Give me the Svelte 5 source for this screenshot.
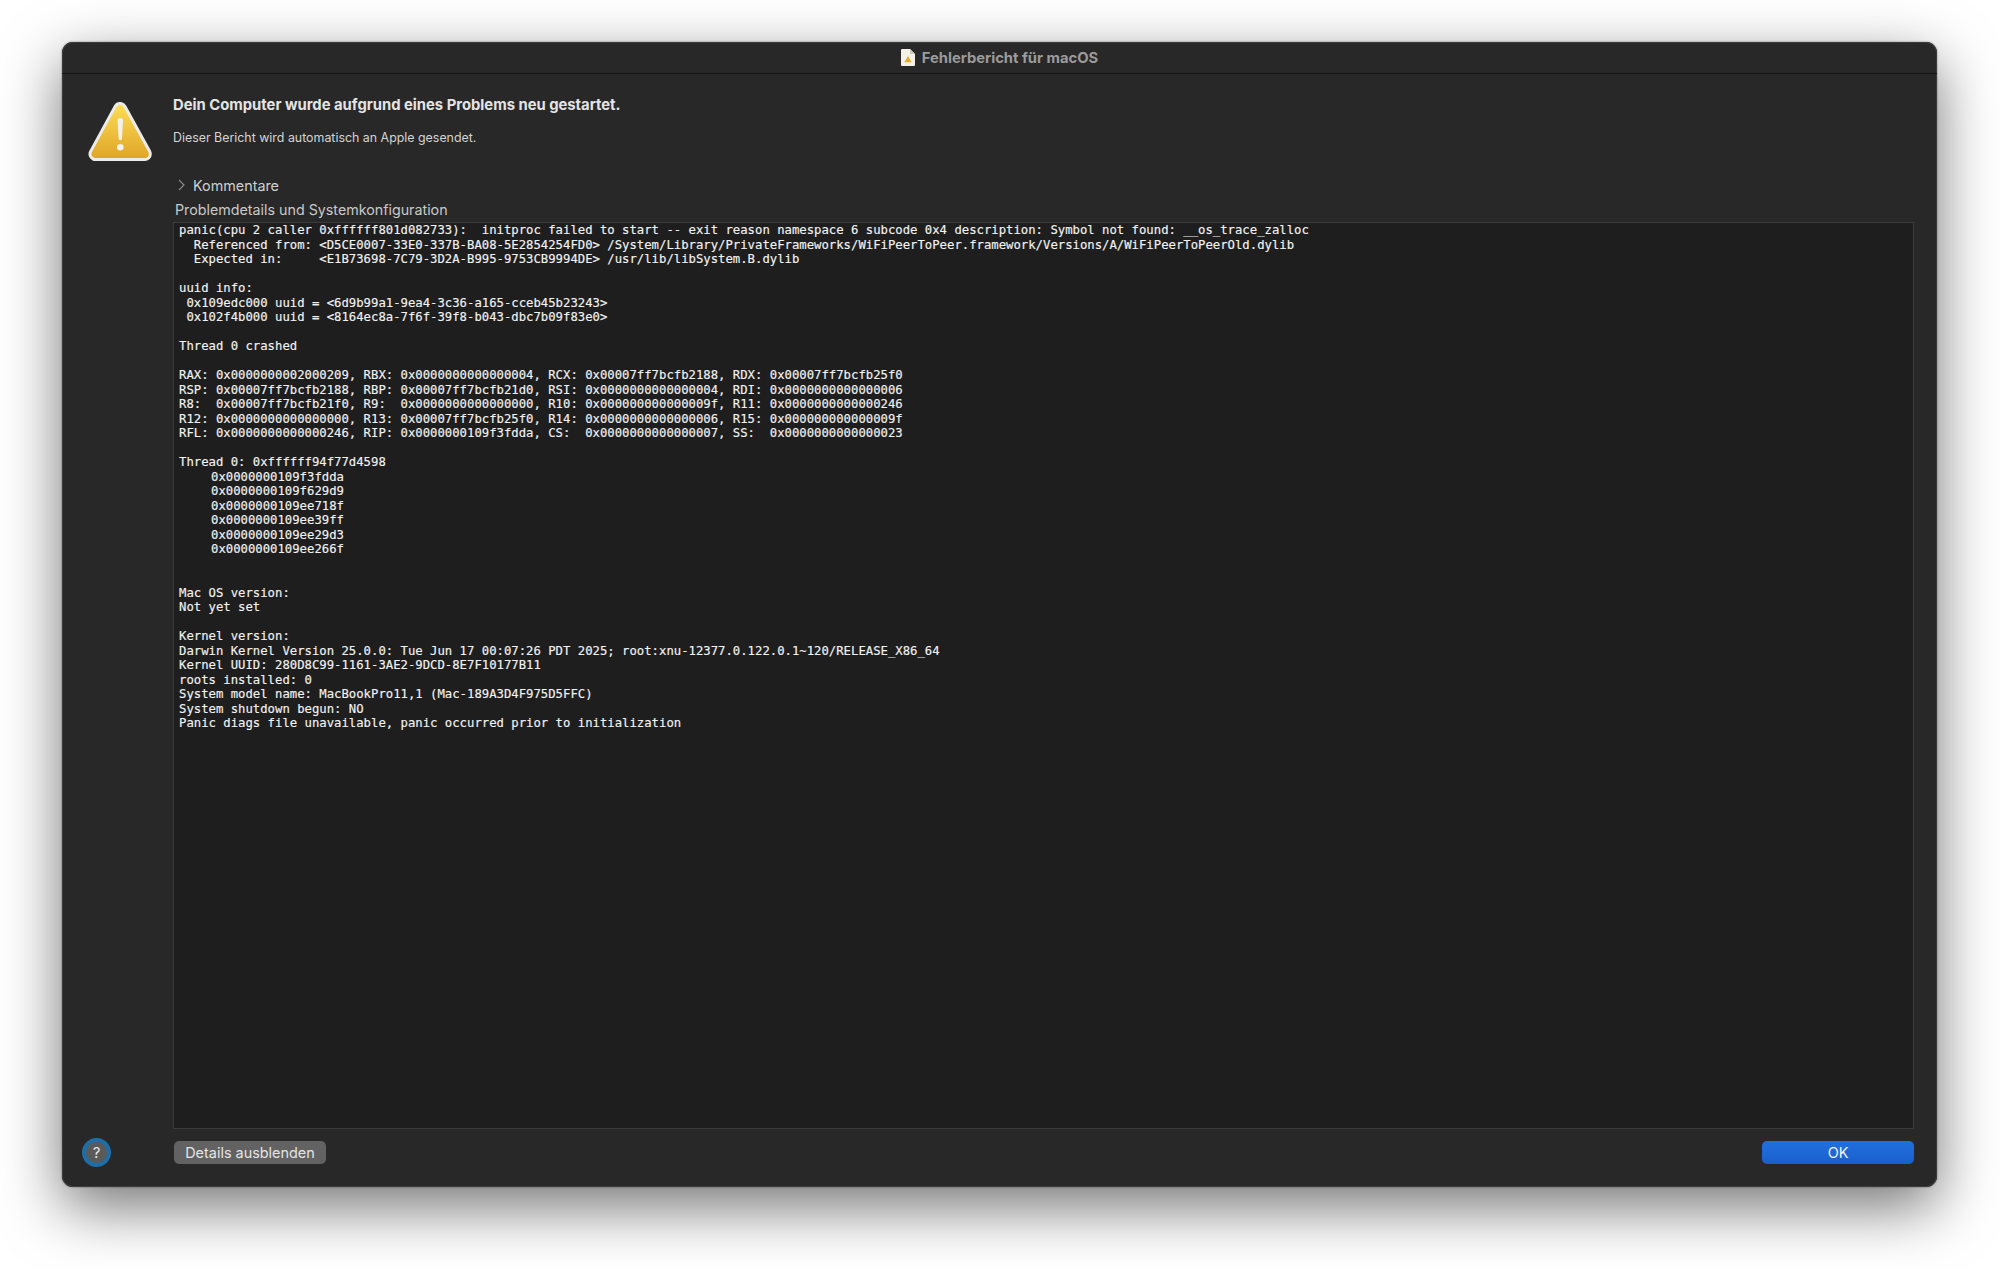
<script>
  const log = `panic(cpu 2 caller 0xffffff801d082733):  initproc failed to start -- exit reason namespace 6 subcode 0x4 description: Symbol not found: __os_trace_zalloc
  Referenced from: <D5CE0007-33E0-337B-BA08-5E2854254FD0> /System/Library/PrivateFrameworks/WiFiPeerToPeer.framework/Versions/A/WiFiPeerToPeerOld.dylib
  Expected in:     <E1B73698-7C79-3D2A-B995-9753CB9994DE> /usr/lib/libSystem.B.dylib

uuid info:
 0x109edc000 uuid = <6d9b99a1-9ea4-3c36-a165-cceb45b23243>
 0x102f4b000 uuid = <8164ec8a-7f6f-39f8-b043-dbc7b09f83e0>

Thread 0 crashed

RAX: 0x0000000002000209, RBX: 0x0000000000000004, RCX: 0x00007ff7bcfb2188, RDX: 0x00007ff7bcfb25f0
RSP: 0x00007ff7bcfb2188, RBP: 0x00007ff7bcfb21d0, RSI: 0x0000000000000004, RDI: 0x0000000000000006
R8:  0x00007ff7bcfb21f0, R9:  0x0000000000000000, R10: 0x000000000000009f, R11: 0x0000000000000246
R12: 0x0000000000000000, R13: 0x00007ff7bcfb25f0, R14: 0x0000000000000006, R15: 0x000000000000009f
RFL: 0x0000000000000246, RIP: 0x0000000109f3fdda, CS:  0x0000000000000007, SS:  0x0000000000000023

Thread 0: 0xffffff94f77d4598
\t0x0000000109f3fdda
\t0x0000000109f629d9
\t0x0000000109ee718f
\t0x0000000109ee39ff
\t0x0000000109ee29d3
\t0x0000000109ee266f


Mac OS version:
Not yet set

Kernel version:
Darwin Kernel Version 25.0.0: Tue Jun 17 00:07:26 PDT 2025; root:xnu-12377.0.122.0.1~120/RELEASE_X86_64
Kernel UUID: 280D8C99-1161-3AE2-9DCD-8E7F10177B11
roots installed: 0
System model name: MacBookPro11,1 (Mac-189A3D4F975D5FFC)
System shutdown begun: NO
Panic diags file unavailable, panic occurred prior to initialization`
</script>

<div class="window">
  <header class="titlebar">
    <svg class="doc" viewBox="0 0 14 17" width="14" height="17">
      <path d="M1 0h8l5 5v11a1 1 0 0 1-1 1H1a1 1 0 0 1-1-1V1a1 1 0 0 1 1-1z" fill="#f4f1e8" />
      <path d="M9 0l5 5H9z" fill="#cfcabd" />
      <path d="M7 7l3.6 6.2H3.4z" fill="#e2ac2c" />
    </svg>
    <span>Fehlerbericht für macOS</span>
  </header>

  <div class="body">
    <aside class="side">
      <svg class="warn" viewBox="0 0 66 60" width="66" height="60">
        <defs>
          <linearGradient id="warn-fill" gradientUnits="userSpaceOnUse" x1="0" y1="4" x2="0" y2="57">
            <stop offset="0" stop-color="#fbdc53" />
            <stop offset="1" stop-color="#e0a428" />
          </linearGradient>
        </defs>
        <path d="M33 7 L8.5 52 H57.8 Z" fill="#ecebe8" stroke="#ecebe8" stroke-width="14" stroke-linejoin="round" />
        <path d="M33 7 L8.5 52 H57.8 Z" fill="url(#warn-fill)" stroke="url(#warn-fill)" stroke-width="8" stroke-linejoin="round" />
        <path d="M30.6 18.6a2.7 2.7 0 0 1 5.4 0L35 36.5a1.7 1.7 0 0 1-3.4 0z" fill="#f3f1ea" />
        <circle cx="33.3" cy="45.3" r="3.3" fill="#f3f1ea" />
      </svg>
    </aside>

    <main class="main">
      <h1>Dein Computer wurde aufgrund eines Problems neu gestartet.</h1>
      <p class="sub">Dieser Bericht wird automatisch an Apple gesendet.</p>

      <div class="disclosure">
        <svg viewBox="0 0 7 12" width="7" height="12">
          <path d="M1 1l5 5-5 5" fill="none" stroke="#8a8a8a" stroke-width="1.2" />
        </svg>
        <span>Kommentare</span>
      </div>

      <div class="label">Problemdetails und Systemkonfiguration</div>
      <pre class="report">{log}</pre>
    </main>
  </div>

  <footer class="footer">
    <div class="help"><span>?</span></div>
    <div class="actions">
      <button class="btn">Details ausblenden</button>
      <button class="btn primary">OK</button>
    </div>
  </footer>
</div>

<style>
  :global(body) {
    background: #fff;
    height: 1269px;
    overflow: hidden;
  }

  .window {
    width: 1875px;
    height: 1145px;
    margin: 42px 0 0 62px;
    display: flex;
    flex-direction: column;
    box-sizing: border-box;
    background: #282828;
    border-radius: 11px;
    color: #e2e2e2;
    font-family: Inter, "Liberation Sans", sans-serif;
    box-shadow: 0 0 0 1px #3c3c3c inset, 0 0 2px rgba(0, 0, 0, 0.5), 0 20px 60px rgba(0, 0, 0, 0.55);
  }

  .titlebar {
    height: 32px;
    flex: none;
    display: flex;
    align-items: center;
    justify-content: center;
    gap: 7px;
    box-sizing: border-box;
    border-bottom: 1px solid #151515;
    color: #9b9b9b;
    font-size: 14.75px;
    font-weight: 700;
  }

  .body {
    flex: 1;
    min-height: 0;
    display: flex;
  }

  .side {
    width: 111px;
    flex: none;
  }

  .warn {
    display: block;
    margin: 28px 0 0 25px;
  }

  .main {
    flex: 1;
    min-width: 0;
    display: flex;
    flex-direction: column;
    padding-right: 23px;
  }

  h1 {
    margin: 22px 0 0;
    font-size: 14.8px;
    line-height: 18px;
    font-weight: 700;
    color: #e4e4e4;
  }

  .sub {
    margin: 16px 0 0;
    font-size: 12.4px;
    line-height: 16px;
    color: #d4d4d4;
  }

  .disclosure {
    margin: 30px 0 0 5px;
    height: 18px;
    display: flex;
    align-items: center;
    gap: 8px;
    font-size: 14.35px;
    color: #cfcfcf;
  }

  .label {
    margin: 7px 0 0 2px;
    height: 17px;
    font-size: 14.27px;
    line-height: 17px;
    color: #c8c8c8;
  }

  .report {
    flex: 1;
    min-height: 0;
    margin: 4px 0 0;
    padding: 0 5px;
    overflow: hidden;
    background: #1e1e1e;
    border: 1px solid #3a3a3a;
    font-family: "DejaVu Sans Mono", monospace;
    font-size: 12.28px;
    line-height: 14.5px;
    tab-size: 32px;
    color: #f2f2f2;
    -webkit-text-stroke: 0.15px #f2f2f2;
  }

  .footer {
    height: 58px;
    flex: none;
    display: flex;
    align-items: flex-start;
    box-sizing: border-box;
    padding: 12px 23px 0 20px;
  }

  .help {
    width: 29px;
    height: 29px;
    box-sizing: border-box;
    margin: -3px 63px 0 0;
    border-radius: 50%;
    border: 4px solid #1f6ea8;
    background: #5a5a5a;
    display: flex;
    align-items: center;
    justify-content: center;
    font-size: 15px;
    color: #e6e6e6;
  }

  .actions {
    flex: 1;
    display: flex;
    justify-content: space-between;
  }

  .btn {
    width: 152px;
    height: 23px;
    padding: 0;
    border: 0;
    border-radius: 5px;
    background: #626262;
    color: #e4e4e4;
    font-family: inherit;
    font-size: 14.43px;
  }

  .primary {
    background: linear-gradient(#2170e0, #1a5fcb);
    color: #f2f5fb;
  }
</style>
